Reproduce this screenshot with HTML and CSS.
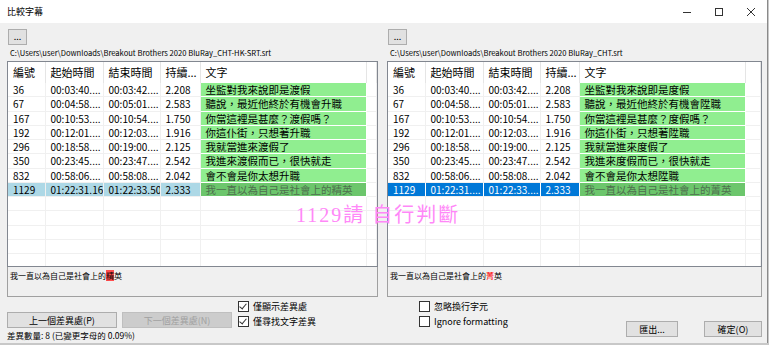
FILE: index.html
```html
<!DOCTYPE html>
<html lang="zh-Hant">
<head>
  <meta charset="UTF-8">
  <title>比較字幕</title>
  <link rel="stylesheet" href="styles.css">
</head>
<body>

<div class="window">

  <!-- title bar -->
  <div class="titlebar">
    <span class="title">比較字幕</span>
    <div class="controls">
      <svg width="10" height="10" viewBox="0 0 10 10"><path d="M1 5.5h8" stroke="#333" stroke-width="1"/></svg>
      <svg width="10" height="10" viewBox="0 0 10 10"><rect x="1.5" y="1.5" width="7" height="7" fill="none" stroke="#333" stroke-width="1"/></svg>
      <svg width="10" height="10" viewBox="0 0 10 10"><path d="M1 1l8 8M9 1l-8 8" stroke="#333" stroke-width="1"/></svg>
    </div>
  </div>

  <div class="panels">

    <!-- left subtitle file -->
    <div class="panel">
      <button class="browse">...</button>
      <div class="path">C:\Users\user\Downloads\Breakout Brothers 2020 BluRay_CHT-HK-SRT.srt</div>
      <div class="grid-wrap">
        <table class="grid left">
          <colgroup><col style="width:37px"><col style="width:58px"><col style="width:57px"><col style="width:40px"><col style="width:166px"><col></colgroup>
          <tr class="head"><th>編號</th><th>起始時間</th><th>結束時間</th><th>持續...</th><th>文字</th><th></th></tr>
          <tr><td>36</td><td>00:03:40....</td><td>00:03:42....</td><td>2.208</td><td class="diff">坐監對我來說即是渡假</td><td></td></tr>
          <tr><td>67</td><td>00:04:58....</td><td>00:05:01....</td><td>2.583</td><td class="diff">聽說，最近他終於有機會升職</td><td></td></tr>
          <tr><td>167</td><td>00:10:53....</td><td>00:10:54....</td><td>1.750</td><td class="diff">你當這裡是甚麼？渡假嗎？</td><td></td></tr>
          <tr><td>192</td><td>00:12:01....</td><td>00:12:03....</td><td>1.916</td><td class="diff">你這仆街，只想著升職</td><td></td></tr>
          <tr><td>296</td><td>00:18:58....</td><td>00:19:00....</td><td>2.125</td><td class="diff">我就當進來渡假了</td><td></td></tr>
          <tr><td>350</td><td>00:23:45....</td><td>00:23:47....</td><td>2.542</td><td class="diff">我進來渡假而已，很快就走</td><td></td></tr>
          <tr><td>832</td><td>00:58:06....</td><td>00:58:08....</td><td>2.042</td><td class="diff">會不會是你太想升職</td><td></td></tr>
          <tr class="sel-soft"><td>1129</td><td>01:22:31.16</td><td>01:22:33.50</td><td>2.333</td><td class="diff current">我一直以為自己是社會上的精英</td><td class="blank"></td></tr>
          <tr class="empty"><td></td><td></td><td></td><td></td><td></td><td></td></tr>
          <tr class="empty"><td></td><td></td><td></td><td></td><td></td><td></td></tr>
          <tr class="empty"><td></td><td></td><td></td><td></td><td></td><td></td></tr>
          <tr class="empty"><td></td><td></td><td></td><td></td><td></td><td></td></tr>
          <tr class="empty"><td></td><td></td><td></td><td></td><td></td><td></td></tr>
        </table>
      </div>
      <div class="textbox">我一直以為自己是社會上的<span class="mark-bg">精</span>英</div>
    </div>

    <!-- right subtitle file -->
    <div class="panel">
      <button class="browse">...</button>
      <div class="path">C:\Users\user\Downloads\Breakout Brothers 2020 BluRay_CHT.srt</div>
      <div class="grid-wrap">
        <table class="grid right">
          <colgroup><col style="width:37px"><col style="width:58px"><col style="width:57px"><col style="width:39px"><col style="width:166px"><col></colgroup>
          <tr class="head"><th>編號</th><th>起始時間</th><th>結束時間</th><th>持續...</th><th>文字</th><th></th></tr>
          <tr><td>36</td><td>00:03:40....</td><td>00:03:42....</td><td>2.208</td><td class="diff">坐監對我來說即是度假</td><td></td></tr>
          <tr><td>67</td><td>00:04:58....</td><td>00:05:01....</td><td>2.583</td><td class="diff">聽說，最近他終於有機會陞職</td><td></td></tr>
          <tr><td>167</td><td>00:10:53....</td><td>00:10:54....</td><td>1.750</td><td class="diff">你當這裡是甚麼？度假嗎？</td><td></td></tr>
          <tr><td>192</td><td>00:12:01....</td><td>00:12:03....</td><td>1.916</td><td class="diff">你這仆街，只想著陞職</td><td></td></tr>
          <tr><td>296</td><td>00:18:58....</td><td>00:19:00....</td><td>2.125</td><td class="diff">我就當進來度假了</td><td></td></tr>
          <tr><td>350</td><td>00:23:45....</td><td>00:23:47....</td><td>2.542</td><td class="diff">我進來度假而已，很快就走</td><td></td></tr>
          <tr><td>832</td><td>00:58:06....</td><td>00:58:08....</td><td>2.042</td><td class="diff">會不會是你太想陞職</td><td></td></tr>
          <tr class="sel"><td>1129</td><td>01:22:31....</td><td>01:22:33....</td><td>2.333</td><td class="diff current">我一直以為自己是社會上的菁英</td><td class="blank"></td></tr>
          <tr class="empty"><td></td><td></td><td></td><td></td><td></td><td></td></tr>
          <tr class="empty"><td></td><td></td><td></td><td></td><td></td><td></td></tr>
          <tr class="empty"><td></td><td></td><td></td><td></td><td></td><td></td></tr>
          <tr class="empty"><td></td><td></td><td></td><td></td><td></td><td></td></tr>
          <tr class="empty"><td></td><td></td><td></td><td></td><td></td><td></td></tr>
        </table>
      </div>
      <div class="textbox">我一直以為自己是社會上的<span class="mark-red">菁</span>英</div>
    </div>

  </div>

  <!-- pasted-on reviewer note across both lists -->
  <div class="note">1129請 自行判斷</div>

  <!-- bottom controls -->
  <div class="footer">
    <div class="nav">
      <div class="nav-buttons">
        <button class="btn nav-btn">上一個差異處(P)</button>
        <button class="btn nav-btn" disabled>下一個差異處(N)</button>
      </div>
      <div class="count">差異數量: 8 (已變更字母的 0.09%)</div>
    </div>

    <div class="checks">
      <label class="check"><span class="box on"></span>僅顯示差異處</label>
      <label class="check"><span class="box on"></span>僅尋找文字差異</label>
    </div>

    <div class="checks">
      <label class="check"><span class="box"></span>忽略換行字元</label>
      <label class="check"><span class="box"></span>Ignore formatting</label>
    </div>

    <div class="actions">
      <button class="btn export">匯出...</button>
      <button class="btn ok">確定(O)</button>
    </div>
  </div>

</div>

</body>
</html>
```

FILE: styles.css
```css
body {
  margin: 0;
  background: #c8c8c8;
  font-family: "Noto Sans CJK TC", "Noto Sans", sans-serif;
  font-size: 10px;
  color: #000;
}

.window {
  position: relative;
  width: 767px;
  height: 343px;
  background: #f0f0f0;
  border-right: 1px solid #8a8a8a;
  overflow: hidden;
}

/* title bar */
.titlebar {
  height: 23px;
  background: #fff;
  display: flex;
  align-items: center;
  padding-left: 7px;
}

.title {
  font-size: 9px;
  flex: 1;
}

.controls {
  display: flex;
  gap: 22px;
  padding-right: 11px;
}

/* two file panels */
.panels {
  display: grid;
  grid-template-columns: 371px 375px;
  column-gap: 9px;
  padding: 6px 0 0 7px;
}

.browse {
  display: block;
  width: 19px;
  height: 16px;
  margin-left: 1px;
  padding: 0;
  background: #e1e1e1;
  border: 1px solid #adadad;
  font-family: inherit;
  font-size: 9px;
  line-height: 8px;
}

.path {
  height: 16px;
  line-height: 16px;
  padding-left: 3px;
  font-size: 7.6px;
  white-space: nowrap;
}

.grid-wrap {
  height: 204px;
  border: 1px solid #828790;
  background: #fff;
  overflow: hidden;
}

.grid {
  border-collapse: collapse;
  table-layout: fixed;
  width: 100%;
  font-size: 10px;
}

.grid th,
.grid td {
  height: 13.25px;
  padding: 0 0 0 5px;
  border-right: 1px solid #f0f0f0;
  border-bottom: 1px solid #f0f0f0;
  white-space: nowrap;
  overflow: hidden;
  text-align: left;
  font-weight: normal;
  line-height: 13px;
}

.grid .head th {
  height: 21px;
  font-size: 11px;
  border-right: 1px solid #e5e5e5;
  border-bottom: none;
}

.grid td.diff {
  background: #90ee90;
  font-size: 10.5px;
  border-right-color: #fff;
  border-bottom-color: #fff;
}

.grid .sel-soft td {
  background: #add8e6;
}

.grid .sel td {
  background: #0078d7;
  color: #fff;
  border-right-color: #fff;
}

.grid .sel-soft td.current,
.grid .sel td.current {
  background: #6cc66c;
  color: #4e6e4e;
}

.grid .sel-soft td.blank,
.grid .sel td.blank {
  background: #fff;
  border-right-color: #f0f0f0;
}

.note {
  position: absolute;
  left: 296px;
  top: 199px;
  font-family: "Liberation Serif", "Noto Sans CJK TC", serif;
  font-size: 20px;
  letter-spacing: 2px;
  color: #ff88f8;
  white-space: nowrap;
}

.textbox {
  height: 30px;
  border: 1px solid #a0a0a0;
  border-top: none;
  padding: 3px 0 0 2px;
  font-size: 8px;
  line-height: 12px;
  box-sizing: border-box;
}

.mark-bg {
  background: #ff4d4d;
}

.mark-red {
  color: #ff0000;
}

/* bottom area */
.footer {
  display: flex;
  height: 45px;
  padding-left: 7px;
}

.nav {
  width: 226px;
  padding-top: 15px;
}

.nav-buttons {
  display: flex;
  gap: 5px;
}

.btn {
  height: 16px;
  padding: 0;
  background: #e1e1e1;
  border: 1px solid #adadad;
  font-family: inherit;
  font-size: 9px;
  color: #000;
}

.btn:disabled {
  background: #cccccc;
  border-color: #bfbfbf;
  color: #a0a0a0;
}

.nav-btn {
  width: 110px;
}

.count {
  font-size: 8.5px;
  line-height: 14px;
}

.checks {
  width: 181px;
  margin-left: 5px;
  padding-top: 4px;
  display: flex;
  flex-direction: column;
  gap: 5px;
}

.checks + .checks {
  width: auto;
  margin-left: 0;
}

.check {
  display: flex;
  align-items: center;
  gap: 4px;
  height: 10px;
  font-size: 9px;
}

.box {
  width: 9px;
  height: 9px;
  border: 1px solid #333;
  background: #fff;
  position: relative;
}

.box.on::after {
  content: "";
  position: absolute;
  left: 2px;
  top: 0px;
  width: 3px;
  height: 6px;
  border: solid #333;
  border-width: 0 1px 1px 0;
  transform: rotate(40deg);
}

.actions {
  margin-left: auto;
  margin-right: 5px;
  padding-top: 24px;
  display: flex;
  gap: 26px;
}

.export {
  width: 52px;
}

.ok {
  width: 58px;
}
```
